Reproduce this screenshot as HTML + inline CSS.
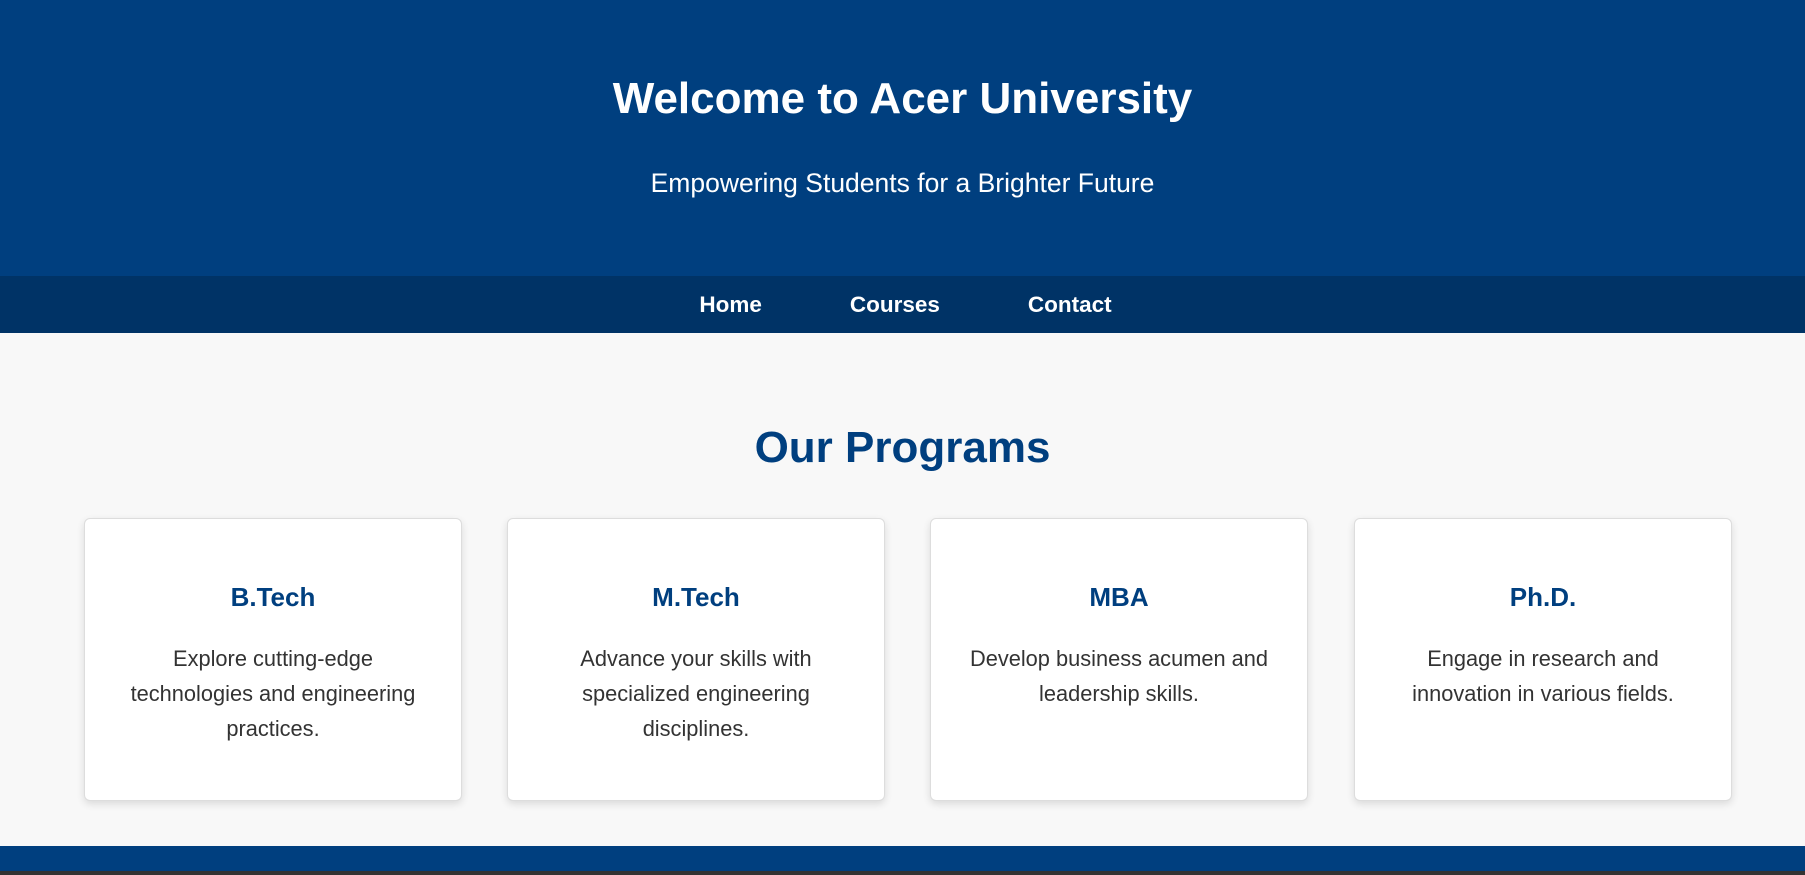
<!DOCTYPE html>
<html><head><meta charset="utf-8"><style>
*{margin:0;padding:0;box-sizing:border-box}
body{width:1805px;height:875px;overflow:hidden;font-family:"Liberation Sans",Arial,sans-serif;background:#f8f8f8}
header{background:#003f7f;height:276px;color:#fff;text-align:center;position:relative}
header h1{position:absolute;top:74px;left:0;right:0;font-size:44px;font-weight:bold}
header p{position:absolute;top:168px;left:0;right:0;font-size:26.5px}
nav{background:#003366;height:57px;display:flex;justify-content:center;align-items:center;padding-left:6px}
nav a{color:#fff;text-decoration:none;font-weight:bold;font-size:22.5px;margin:0 44px}
h2{position:absolute;top:423px;left:0;right:0;text-align:center;color:#003f7f;font-size:44px}
.card{position:absolute;top:518px;width:378px;height:283px;background:#fff;border:1px solid #ddd;border-radius:6px;box-shadow:0 3px 8px rgba(0,0,0,.12);text-align:center;padding:0 30px}
.card h3{margin-top:63px;color:#003f7f;font-size:26px}
.card p{margin-top:28px;color:#333;font-size:21.8px;line-height:35px}
.f1{position:absolute;top:846px;left:0;width:1805px;height:25px;background:#003f7f}
.f2{position:absolute;top:871px;left:0;width:1805px;height:4px;background:#333}
</style></head><body>
<header><h1>Welcome to Acer University</h1><p>Empowering Students for a Brighter Future</p></header>
<nav><a>Home</a><a>Courses</a><a>Contact</a></nav>
<h2>Our Programs</h2>
<div class="card" style="left:84px"><h3>B.Tech</h3><p>Explore cutting-edge technologies and engineering practices.</p></div>
<div class="card" style="left:507px"><h3>M.Tech</h3><p>Advance your skills with specialized engineering disciplines.</p></div>
<div class="card" style="left:930px"><h3>MBA</h3><p>Develop business acumen and leadership skills.</p></div>
<div class="card" style="left:1354px"><h3>Ph.D.</h3><p>Engage in research and innovation in various fields.</p></div>
<div class="f1"></div><div class="f2"></div>
</body></html>
